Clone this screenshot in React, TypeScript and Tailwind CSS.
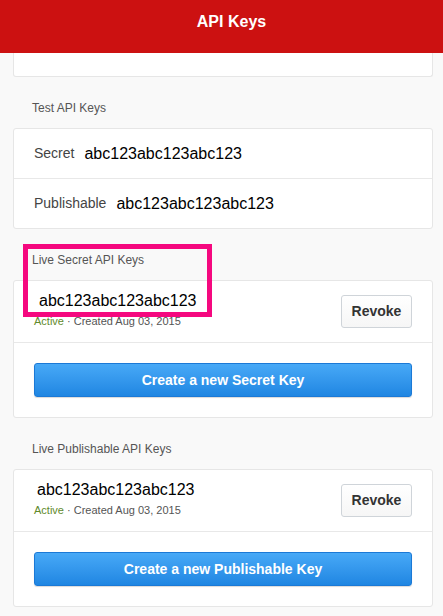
export default function App() {
  const keyValue = "abc123abc123abc123";

  return (
    <div className="relative min-h-screen bg-[#f9f9f9] font-['Liberation_Sans',Arial,sans-serif] overflow-hidden">
      {/* HEADER */}
      <div className="h-[53px] bg-[#cc1111] pl-[20px] pt-[12px]">
        <h1 className="text-center text-[16px] leading-[20px] font-bold text-white">API Keys</h1>
      </div>

      {/* CUT-OFF CARD */}
      <div className="ml-[13px] mr-[10px] h-[24px] bg-white border border-t-0 border-[#e6e6e6] rounded-b-[3px]" />

      {/* TEST KEYS */}
      <SectionLabel>Test API Keys</SectionLabel>
      <div className="ml-[13px] mr-[10px] bg-white border border-[#e6e6e6] rounded-[3px]">
        <div className="flex items-center gap-[10px] h-[50px] px-[20px] border-b border-[#e8e8e8]">
          <span className="text-[14px] text-[#444]">Secret</span>
          <span className="text-[16px] text-black">{keyValue}</span>
        </div>
        <div className="flex items-center gap-[10px] h-[49px] px-[20px]">
          <span className="text-[14px] text-[#444]">Publishable</span>
          <span className="text-[16px] text-black">{keyValue}</span>
        </div>
      </div>

      {/* LIVE SECRET */}
      <SectionLabel>Live Secret API Keys</SectionLabel>
      <LiveCard keyValue={keyValue} indent="ml-[5px]" action="Create a new Secret Key" />

      {/* LIVE PUBLISHABLE */}
      <SectionLabel>Live Publishable API Keys</SectionLabel>
      <LiveCard keyValue={keyValue} indent="ml-[3px]" action="Create a new Publishable Key" />

      {/* ANNOTATION */}
      <div className="absolute left-[23px] top-[244px] w-[189px] h-[73px] border-[5px] border-[#f5087f] pointer-events-none" />
    </div>
  );
}

function SectionLabel({ children }: { children: string }) {
  return (
    <div className="mt-[24px] mb-[13px] pl-[32px] text-[12px] leading-[14px] text-[#555]">
      {children}
    </div>
  );
}

function LiveCard({
  keyValue,
  indent,
  action,
}: {
  keyValue: string;
  indent: string;
  action: string;
}) {
  return (
    <div className="ml-[13px] mr-[10px] bg-white border border-[#e6e6e6] rounded-[3px]">
      <div className="flex items-center justify-between h-[62px] px-[20px] border-b border-[#e8e8e8]">
        <div className="self-start pt-[10px]">
          <div className={`${indent} text-[16px] leading-[20px] text-black`}>{keyValue}</div>
          <div className="mt-[4px] text-[11px] leading-[13px] text-[#555]">
            <span className="text-[#5f8a2c]">Active</span> · Created Aug 03, 2015
          </div>
        </div>
        <button className="w-[71px] h-[33px] rounded-[3px] border border-[#cfd4d9] bg-gradient-to-b from-white to-[#f6f6f6] text-[14px] font-bold text-[#333]">
          Revoke
        </button>
      </div>
      <div className="px-[20px] pt-[20px] pb-[20px]">
        <button className="w-full h-[34px] rounded-[3px] border border-[#1b79d6] bg-gradient-to-b from-[#47a9f7] to-[#1f86e2] text-[14px] font-bold text-white shadow-[0_1px_1px_rgba(0,0,0,0.15)]">
          {action}
        </button>
      </div>
    </div>
  );
}
